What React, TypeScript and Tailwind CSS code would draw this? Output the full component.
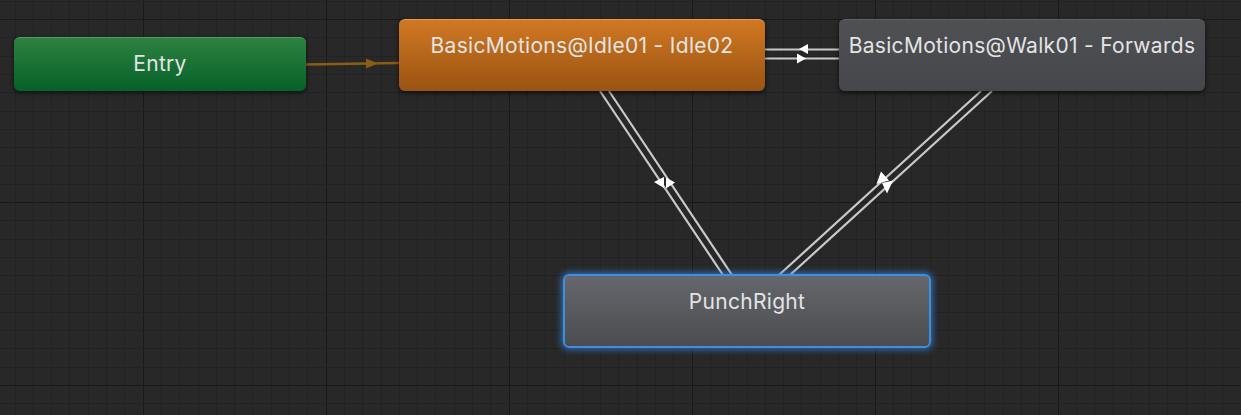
import React from 'react'

// canvas size
const W = 1241
const H = 415

// grid: minor every 18.3px, major every 10th
const STEP = 18.3
const X0 = 14.5
const Y0 = 0.7

type Seg = { x1: number; y1: number; x2: number; y2: number }

const WHITE_LINES: Seg[] = [
  // idle <-> walk
  { x1: 765, y1: 49.5, x2: 839, y2: 49.5 },
  { x1: 765, y1: 58.5, x2: 839, y2: 58.5 },
  // idle <-> punch
  { x1: 600, y1: 91, x2: 723, y2: 275 },
  { x1: 609, y1: 91, x2: 732, y2: 275 },
  // walk <-> punch
  { x1: 981, y1: 91, x2: 779, y2: 275 },
  { x1: 992, y1: 91, x2: 790, y2: 275 },
]

const ARROWS = [
  '799,49 808,44 808,54',
  '806,58.5 797,53.5 797,63.5',
  '654,182 664,177 664,188',
  '675,182.5 666,177.5 666,188.5',
  '881,171.5 876.5,184 889,180.5',
  '887,193.5 882,183 893,180.5',
]

function GridLines() {
  const xs: number[] = []
  const ys: number[] = []
  for (let i = 0; X0 + i * STEP < W; i++) xs.push(i)
  for (let i = 0; Y0 + i * STEP < H; i++) ys.push(i)
  return (
    <g shapeRendering="crispEdges">
      {xs.map((i) => {
        const x = Math.round(X0 + i * STEP) + 0.5
        const major = i % 10 === 7
        return (
          <line
            key={`vx-${i}`}
            x1={x}
            y1={0}
            x2={x}
            y2={H}
            stroke={major ? '#191919' : '#222222'}
            strokeWidth={1}
          />
        )
      })}
      {ys.map((i) => {
        const y = Math.round(Y0 + i * STEP) + 0.5
        const major = i % 10 === 1
        return (
          <line
            key={`hy-${i}`}
            x1={0}
            y1={y}
            x2={W}
            y2={y}
            stroke={major ? '#191919' : '#222222'}
            strokeWidth={1}
          />
        )
      })}
    </g>
  )
}

function Transitions() {
  return (
    <svg className="absolute inset-0" width={W} height={H}>
      <GridLines />
      {/* entry -> idle */}
      <line x1={306} y1={64.5} x2={399} y2={63} stroke="#8a5d12" strokeWidth={2.5} />
      <polygon points="378,63.5 366,58.5 366,68.5" fill="#8a5d12" />
      {WHITE_LINES.map((s, i) => (
        <line
          key={`t-${i}`}
          x1={s.x1}
          y1={s.y1}
          x2={s.x2}
          y2={s.y2}
          stroke="#c9c9c9"
          strokeWidth={2.2}
        />
      ))}
      {ARROWS.map((p, i) => (
        <polygon key={`a-${i}`} points={p} fill="#ffffff" />
      ))}
    </svg>
  )
}

function StateNode({
  label,
  className,
  textClass,
}: {
  label: string
  className: string
  textClass?: string
}) {
  return (
    <div className={`absolute rounded-[6px] ${className}`}>
      <div
        className={`w-full text-center whitespace-nowrap font-['Inter',sans-serif] text-[21px] leading-[24px] tracking-[0.3px] text-[#e4e4e4] ${
          textClass ?? 'pt-[14px]'
        }`}
      >
        {label}
      </div>
    </div>
  )
}

export default function App() {
  return (
    <div className="relative w-[1241px] h-[415px] overflow-hidden bg-[#282828]">
      <Transitions />

      <StateNode
        label="Entry"
        className="left-[14px] top-[37px] w-[292px] h-[54px] bg-[linear-gradient(#2d823f,#05602a)] border-t border-[#4e9c5e] shadow-[0_2px_4px_rgba(0,0,0,0.55)]"
        textClass="pt-[14px]"
      />

      <StateNode
        label="BasicMotions@Idle01 - Idle02"
        className="left-[399px] top-[19px] w-[366px] h-[72px] bg-[linear-gradient(#d07823,#9a5311)] border-t border-[#e09a58] shadow-[0_2px_5px_rgba(0,0,0,0.6)]"
      />

      <StateNode
        label="BasicMotions@Walk01 - Forwards"
        className="left-[839px] top-[19px] w-[366px] h-[72px] bg-[linear-gradient(#4e5054,#45474b)] border-t border-[#606266] shadow-[0_2px_5px_rgba(0,0,0,0.6)]"
      />

      <StateNode
        label="PunchRight"
        className="left-[563px] top-[274px] w-[368px] h-[74px] bg-[linear-gradient(#65676c,#4a4c50)] border-2 border-[#3f8fdd] shadow-[0_0_6px_2px_rgba(50,130,220,0.7)]"
        textClass="pt-[14px]"
      />
    </div>
  )
}
